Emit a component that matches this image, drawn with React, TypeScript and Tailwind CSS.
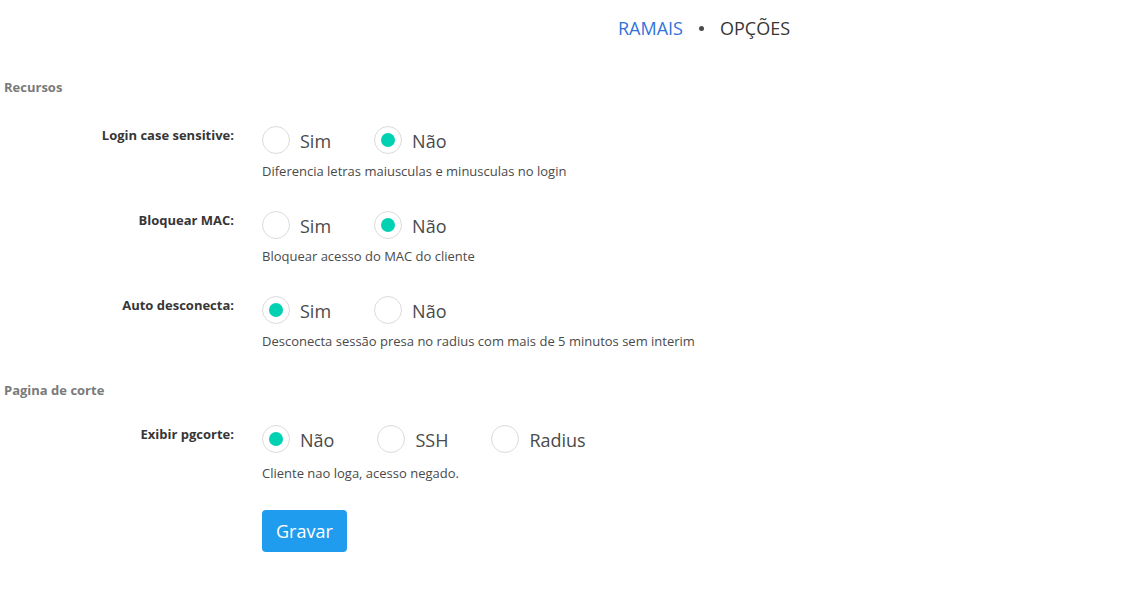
// Configurações — aba Opções (recursos e página de corte).
import { useState } from "react";

type Opt = { value: string; label: string };

function RadioGroup({
  name,
  options,
  value,
  onChange,
}: {
  name: string;
  options: Opt[];
  value: string;
  onChange: (v: string) => void;
}) {
  return (
    <div className="flex items-center h-[28px]">
      {options.map((o) => {
        const on = o.value === value;
        return (
          <label
            key={o.value}
            className="flex items-center mr-[43px] cursor-pointer"
            onClick={() => onChange(o.value)}
          >
            <span className="w-[28px] h-[28px] rounded-full border border-[#dbdbdb] bg-white flex items-center justify-center">
              {on && <span className="w-[14px] h-[14px] rounded-full bg-[#00d1b2]" />}
            </span>
            <input type="radio" name={name} className="hidden" readOnly checked={on} />
            <span className="ml-[10px] text-[18px] leading-[28px] pt-[2px] text-[#4a4a4a]">
              {o.label}
            </span>
          </label>
        );
      })}
    </div>
  );
}

function Field({
  label,
  help,
  helpGap = "mt-[8px]",
  children,
}: {
  label: string;
  help: string;
  helpGap?: string;
  children: React.ReactNode;
}) {
  return (
    <div className="grid grid-cols-[234px_1fr] gap-x-[28px]">
      <p className="text-right text-[13px] leading-[18px] font-bold text-[#363636]">{label}</p>
      <div>
        {children}
        <p className={`${helpGap} text-[13px] leading-[18px] text-[#4a4a4a]`}>{help}</p>
      </div>
    </div>
  );
}

const simNao: Opt[] = [
  { value: "sim", label: "Sim" },
  { value: "nao", label: "Não" },
];

export default function App() {
  const [caseSens, setCaseSens] = useState("nao");
  const [bloqMac, setBloqMac] = useState("nao");
  const [autoDesc, setAutoDesc] = useState("sim");
  const [pgcorte, setPgcorte] = useState("nao");

  return (
    <div className="min-h-screen bg-white font-['Open_Sans','Noto_Sans',sans-serif] text-[#4a4a4a]">
      {/* Tabs */}
      <nav className="flex items-center pl-[618px] h-[56px] text-[18px]">
        <a className="text-[#3273dc]">RAMAIS</a>
        <span className="mx-[16px] w-[5px] h-[5px] rounded-full bg-[#4a4a4a]" />
        <a className="text-[#363636]">OPÇÕES</a>
      </nav>

      <div className="pl-[4px] pt-[22px]">
        <h3 className="text-[13px] leading-[18px] font-bold text-[#7a7a7a]">Recursos</h3>
      </div>

      <div className="mt-[30px] flex flex-col gap-[31px]">
        <Field label="Login case sensitive:" help="Diferencia letras maiusculas e minusculas no login">
          <RadioGroup name="case" options={simNao} value={caseSens} onChange={setCaseSens} />
        </Field>
        <Field label="Bloquear MAC:" help="Bloquear acesso do MAC do cliente">
          <RadioGroup name="mac" options={simNao} value={bloqMac} onChange={setBloqMac} />
        </Field>
        <Field
          label="Auto desconecta:"
          help="Desconecta sessão presa no radius com mais de 5 minutos sem interim"
        >
          <RadioGroup name="auto" options={simNao} value={autoDesc} onChange={setAutoDesc} />
        </Field>
      </div>

      <div className="pl-[4px] mt-[31px]">
        <h3 className="text-[13px] leading-[18px] font-bold text-[#7a7a7a]">Pagina de corte</h3>
      </div>

      <div className="mt-[26px]">
        <Field label="Exibir pgcorte:" help="Cliente nao loga, acesso negado." helpGap="mt-[11px]">
          <RadioGroup
            name="pgcorte"
            options={[
              { value: "nao", label: "Não" },
              { value: "ssh", label: "SSH" },
              { value: "radius", label: "Radius" },
            ]}
            value={pgcorte}
            onChange={setPgcorte}
          />
        </Field>
      </div>

      <div className="mt-[28px] pl-[262px]">
        <button
          type="button"
          className="h-[42px] px-[14px] rounded-[4px] bg-[#209cee] text-white text-[18px]"
        >
          Gravar
        </button>
      </div>
    </div>
  );
}
